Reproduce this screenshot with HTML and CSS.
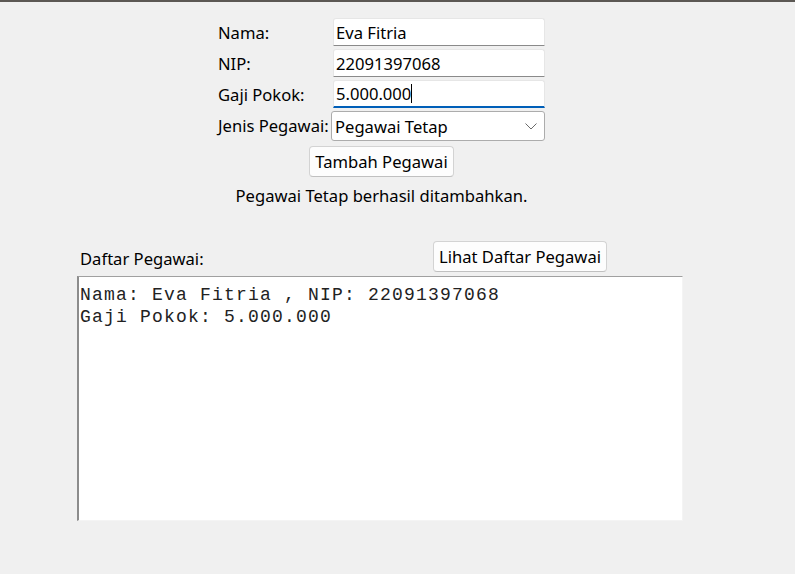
FILE: index.html
```html
<!DOCTYPE html>
<html lang="id">
<head>
<meta charset="utf-8">
<title>Data Pegawai</title>
<link rel="stylesheet" href="styles.css">
</head>
<body>
<div class="window">
  <div class="form">
    <label class="lbl">Nama:</label>
    <div class="entry"><span>Eva Fitria</span></div>
    <label class="lbl">NIP:</label>
    <div class="entry"><span>22091397068</span></div>
    <label class="lbl">Gaji Pokok:</label>
    <div class="entry focused"><span>5.000.000</span><span class="caret"></span></div>
    <label class="lbl">Jenis Pegawai:</label>
    <div class="combo">
      <span>Pegawai Tetap</span>
      <svg class="chev" width="12" height="7" viewBox="0 0 12 7"><polyline points="0.5,0.5 6,6 11.5,0.5" fill="none" stroke="#6a6a6a" stroke-width="1"/></svg>
    </div>
    <div class="center-row"><button class="btn btn-add">Tambah Pegawai</button></div>
    <div class="center-row msg">Pegawai Tetap berhasil ditambahkan.</div>
  </div>
  <div class="list">
    <div class="list-head">
      <span class="list-lbl">Daftar Pegawai:</span>
      <button class="btn btn-view">Lihat Daftar Pegawai</button>
    </div>
    <div class="textbox">Nama: Eva Fitria , NIP: 22091397068
Gaji Pokok: 5.000.000</div>
  </div>
</div>
</body>
</html>
```
FILE: styles.css
```css
html, body {
  margin: 0;
  padding: 0;
}
body {
  background: #f0f0f0;
  width: 795px;
  height: 574px;
  overflow: hidden;
  font-family: "Noto Sans", "Open Sans", sans-serif;
  font-size: 16.6px;
  color: #000;
}
.window {
  border-top: 2px solid #5c5854;
  height: 572px;
  box-sizing: border-box;
}
.form {
  display: grid;
  grid-template-columns: 113px 214px;
  row-gap: 3px;
  margin-left: 218px;
  width: 327px;
  padding-top: 16px;
}
.lbl {
  display: flex;
  align-items: center;
  height: 28px;
  white-space: nowrap;
}
.entry {
  height: 28px;
  box-sizing: border-box;
  background: #fff;
  border: 1px solid #e6e6e6;
  border-bottom: 1px solid #8a8a8a;
  border-radius: 3px 3px 0 0;
  margin-left: 2px;
  display: flex;
  align-items: center;
  padding-left: 2px;
}
.entry.focused {
  border-bottom: 2px solid #005fb8;
}
.caret {
  display: inline-block;
  width: 1px;
  height: 19px;
  background: #000;
}
.combo {
  height: 30px;
  box-sizing: border-box;
  background: #fff;
  border: 1px solid #acacac;
  border-radius: 3px;
  display: flex;
  align-items: center;
  justify-content: space-between;
  padding: 0 7px 0 3px;
}
.chev {
  display: block;
}
.center-row {
  grid-column: 1 / 3;
  display: flex;
  justify-content: center;
}
.btn {
  font-family: "Noto Sans", "Open Sans", sans-serif;
  font-size: 16.6px;
  color: #000;
  background: #fdfdfd;
  border: 1px solid #d3d3d3;
  border-bottom-color: #c0c0c0;
  border-radius: 4px;
  height: 31px;
  padding: 0 4px;
  margin: 0;
  white-space: nowrap;
}
.btn-add {
  margin-top: 2px;
  width: 145px;
}
.msg {
  margin-top: 4px;
  height: 22px;
  align-items: center;
}
.list {
  margin-left: 77px;
  width: 606px;
  margin-top: 35px;
}
.list-head {
  display: flex;
  align-items: center;
  height: 31px;
}
.list-lbl {
  padding-left: 3px;
  width: 353px;
  margin-top: 4px;
}
.btn-view {
  width: 174px;
}
.textbox {
  margin-top: 4px;
  height: 245px;
  box-sizing: border-box;
  background: #fff;
  border-top: 1px solid #a0a0a0;
  border-left: 2px solid #8c8c8c;
  border-right: 1px solid #f4f4f4;
  border-bottom: 1px solid #f4f4f4;
  font-family: "Liberation Mono", "Courier New", monospace;
  font-size: 18px;
  letter-spacing: 1.2px;
  line-height: 22px;
  padding: 7px 0 0 1px;
  white-space: pre;
  color: #222;
}
```
